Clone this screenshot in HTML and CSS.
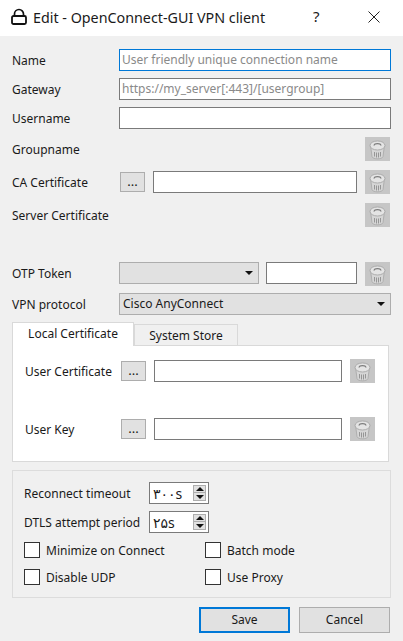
FILE: index.html
```html
<!DOCTYPE html>
<html lang="en">
<head>
    <meta charset="UTF-8">
    <meta name="viewport" content="width=device-width, initial-scale=1.0">
    <title>Edit - OpenConnect-GUI VPN client</title>
    <link rel="stylesheet" href="styles.css">
</head>
<body>
    <svg class="sprite" width="0" height="0">
        <symbol id="trash" viewBox="0 0 25 24">
            <path d="M5.500 8l1.500 11.500c.3 1.500 2.800 2.300 5.500 2.300s5.200-.8 5.500-2.300L19.500 8z" fill="#d6d6d6" stroke="#a6a6a6" stroke-width=".8"/>
            <ellipse cx="12.500" cy="8.500" rx="7.500" ry="4.500" fill="#e4e4e4" stroke="#a0a0a0" stroke-width=".8"/>
            <path d="M9 8.500c.5-2.600 6.500-2.600 7 0" fill="none" stroke="#7c7c7c" stroke-width="1.300"/>
            <path d="M9.500 15v4.500M11.500 15.500v5M13.500 15.500v5M15.500 15v4.500" stroke="#969696" stroke-width="1"/>
        </symbol>
    </svg>

    <div class="titlebar">
        <svg class="lock" width="16" height="17" viewBox="0 0 16 17">
            <path d="M3.500 8V6a4.500 4.500 0 0 1 9 0v2" fill="none" stroke="#111" stroke-width="1.700"/>
            <rect x="1" y="8" width="14" height="8" rx="1.500" fill="none" stroke="#111" stroke-width="1.800"/>
        </svg>
        <span class="title">Edit - OpenConnect-GUI VPN client</span>
        <span class="help">?</span>
        <svg class="close" width="12" height="12" viewBox="0 0 12 12">
            <path d="M.5.500l11 11M11.500.500l-11 11" stroke="#222" stroke-width="1"/>
        </svg>
    </div>

    <div class="form">
        <div class="row r-name">
            <label>Name</label>
            <div class="input focus placeholder">User friendly unique connection name</div>
        </div>
        <div class="row r-gateway">
            <label>Gateway</label>
            <div class="input placeholder">https://my_server[:443]/[usergroup]</div>
        </div>
        <div class="row r-user">
            <label>Username</label>
            <div class="input"></div>
        </div>
        <div class="row r-group">
            <label>Groupname</label>
            <div class="spacer"></div>
            <div class="trash"><svg width="25" height="24"><use href="#trash"/></svg></div>
        </div>
        <div class="row r-ca">
            <label>CA Certificate</label>
            <div class="dots">...</div>
            <div class="input"></div>
            <div class="trash"><svg width="25" height="24"><use href="#trash"/></svg></div>
        </div>
        <div class="row r-server">
            <label>Server Certificate</label>
            <div class="spacer"></div>
            <div class="trash"><svg width="25" height="24"><use href="#trash"/></svg></div>
        </div>
        <div class="row r-otp">
            <label>OTP Token</label>
            <div class="select otp-select"><span class="arrow"></span></div>
            <div class="input"></div>
            <div class="trash"><svg width="25" height="24"><use href="#trash"/></svg></div>
        </div>
        <div class="row r-vpn">
            <label>VPN protocol</label>
            <div class="select">Cisco AnyConnect<span class="arrow"></span></div>
        </div>

        <div class="tabs">
            <div class="tab active">Local Certificate</div>
            <div class="tab">System Store</div>
        </div>
        <div class="tab-panel">
            <div class="row">
                <label>User Certificate</label>
                <div class="dots">...</div>
                <div class="input"></div>
                <div class="trash"><svg width="25" height="24"><use href="#trash"/></svg></div>
            </div>
            <div class="row">
                <label>User Key</label>
                <div class="dots">...</div>
                <div class="input"></div>
                <div class="trash"><svg width="25" height="24"><use href="#trash"/></svg></div>
            </div>
        </div>

        <div class="group">
            <div class="row">
                <label>Reconnect timeout</label>
                <div class="spin"><span class="spin-value">۳۰۰s</span><span class="spin-btns"><i class="up"></i><i class="down"></i></span></div>
            </div>
            <div class="row">
                <label>DTLS attempt period</label>
                <div class="spin"><span class="spin-value">۲۵s</span><span class="spin-btns"><i class="up"></i><i class="down"></i></span></div>
            </div>
            <div class="checks">
                <div class="check"><span class="box"></span>Minimize on Connect</div>
                <div class="check"><span class="box"></span>Batch mode</div>
                <div class="check"><span class="box"></span>Disable UDP</div>
                <div class="check"><span class="box"></span>Use Proxy</div>
            </div>
        </div>

        <div class="buttons">
            <div class="btn default">Save</div>
            <div class="btn">Cancel</div>
        </div>
    </div>
</body>
</html>
```

FILE: styles.css
```css
html, body {
    margin: 0;
    padding: 0;
}
body {
    width: 403px;
    height: 641px;
    overflow: hidden;
    background: #f0f0f0;
    font-family: "Noto Sans", "DejaVu Sans", sans-serif;
    font-size: 12px;
    color: #1a1a1a;
}
.sprite {
    display: block;
    height: 0;
}
.titlebar {
    height: 36px;
    background: white;
    display: flex;
    align-items: center;
    position: relative;
}
.lock {
    margin-left: 11px;
    margin-top: -3px;
}
.title {
    margin-left: 6px;
    margin-top: -2px;
    font-size: 14.3px;
}
.help {
    position: absolute;
    left: 313px;
    top: 6px;
    font-size: 15px;
}
.close {
    position: absolute;
    left: 368px;
    top: 11px;
}
.form {
    padding: 13px 12px 0;
}
.row {
    display: flex;
    align-items: center;
    height: 22px;
    margin-bottom: 7px;
}
.row label {
    width: 107px;
    flex: none;
}
.input {
    flex: 1;
    height: 22px;
    box-sizing: border-box;
    background: white;
    border: 1px solid #7a7a7a;
    padding-left: 2px;
    line-height: 19px;
    white-space: nowrap;
}
.input.focus {
    border-color: #0078d7;
}
.placeholder {
    color: #8a8a8a;
}
.spacer {
    flex: 1;
}
.trash {
    width: 25px;
    height: 24px;
    flex: none;
    margin-left: 8px;
    background: #c6c6c6;
}
.trash svg {
    display: block;
}
.dots {
    width: 25px;
    height: 20px;
    flex: none;
    box-sizing: border-box;
    margin: 0 8px 0 1px;
    background: #e1e1e1;
    border: 1px solid #adadad;
    text-align: center;
    font-size: 13px;
    line-height: 17px;
}
.r-group, .r-ca, .r-server, .r-otp {
    height: 24px;
    margin-bottom: 9px;
}
.r-user {
    margin-bottom: 8px;
}
.r-server {
    margin-bottom: 35px;
}
.r-ca .input, .r-otp .input {
    flex: none;
    width: 204px;
}
.r-ca .trash, .r-group .trash, .r-server .trash, .r-otp .trash {
    margin-right: 1px;
}
.r-otp {
    align-items: flex-start;
    margin-bottom: 7px;
}
.r-otp label {
    line-height: 23px;
}
.r-otp .input {
    width: 91px;
}
.select {
    flex: 1;
    height: 22px;
    box-sizing: border-box;
    background: #e1e1e1;
    border: 1px solid #adadad;
    padding-left: 3px;
    line-height: 20px;
    position: relative;
}
.otp-select {
    flex: none;
    width: 140px;
    margin-right: 7px;
}
.arrow {
    position: absolute;
    right: 5px;
    top: 8px;
    border-left: 4px solid transparent;
    border-right: 4px solid transparent;
    border-top: 4px solid #111;
}
.tabs {
    display: flex;
    align-items: flex-start;
    height: 23px;
}
.tab {
    height: 21px;
    width: 104px;
    box-sizing: border-box;
    margin-top: 2px;
    border: 1px solid #d9d9d9;
    border-bottom: none;
    text-align: center;
    line-height: 21px;
}
.tab.active {
    height: 24px;
    width: 122px;
    margin-top: 0;
    background: white;
    line-height: 22px;
    position: relative;
    z-index: 1;
}
.tab-panel {
    width: 377px;
    height: 117px;
    box-sizing: border-box;
    background: white;
    border: 1px solid #d9d9d9;
    padding: 13px 13px 0 12px;
}
.tab-panel .row {
    height: 24px;
    margin-bottom: 34px;
}
.tab-panel label {
    width: 95px;
}
.tab-panel .input {
    flex: none;
    width: 188px;
}
.group {
    width: 379px;
    height: 128px;
    box-sizing: border-box;
    margin-top: 8px;
    border: 1px solid #dcdcdc;
    padding: 11px 11px 0;
}
.group .row {
    margin-bottom: 7px;
}
.group label {
    width: 125px;
}
.spin {
    width: 60px;
    height: 22px;
    box-sizing: border-box;
    background: white;
    border: 1px solid #7a7a7a;
    display: flex;
    align-items: center;
    justify-content: space-between;
    padding: 0 2px 0 3px;
}
.spin-value {
    font-size: 14px;
}
.spin-btns {
    display: flex;
    flex-direction: column;
}
.spin-btns i {
    display: flex;
    align-items: center;
    justify-content: center;
    width: 13px;
    height: 8px;
    box-sizing: border-box;
    background: #e1e1e1;
    border: 1px solid #adadad;
}
.spin-btns .down {
    border-top: none;
}
.spin-btns i::after {
    content: "";
    border-left: 4px solid transparent;
    border-right: 4px solid transparent;
}
.spin-btns .up::after {
    border-bottom: 4px solid #111;
}
.spin-btns .down::after {
    border-top: 4px solid #111;
}
.checks {
    display: grid;
    grid-template-columns: 181px 1fr;
    row-gap: 11px;
    margin-top: 9px;
}
.check {
    display: flex;
    align-items: center;
    height: 16px;
}
.box {
    width: 16px;
    height: 16px;
    box-sizing: border-box;
    background: white;
    border: 1px solid #333;
    margin-right: 6px;
}
.buttons {
    display: flex;
    justify-content: flex-end;
    gap: 9px;
    margin-top: 9px;
    padding-right: 1px;
}
.btn {
    width: 91px;
    height: 26px;
    box-sizing: border-box;
    background: #e1e1e1;
    border: 1px solid #adadad;
    text-align: center;
    line-height: 23px;
}
.btn.default {
    border: 2px solid #0078d7;
    line-height: 21px;
}
```
